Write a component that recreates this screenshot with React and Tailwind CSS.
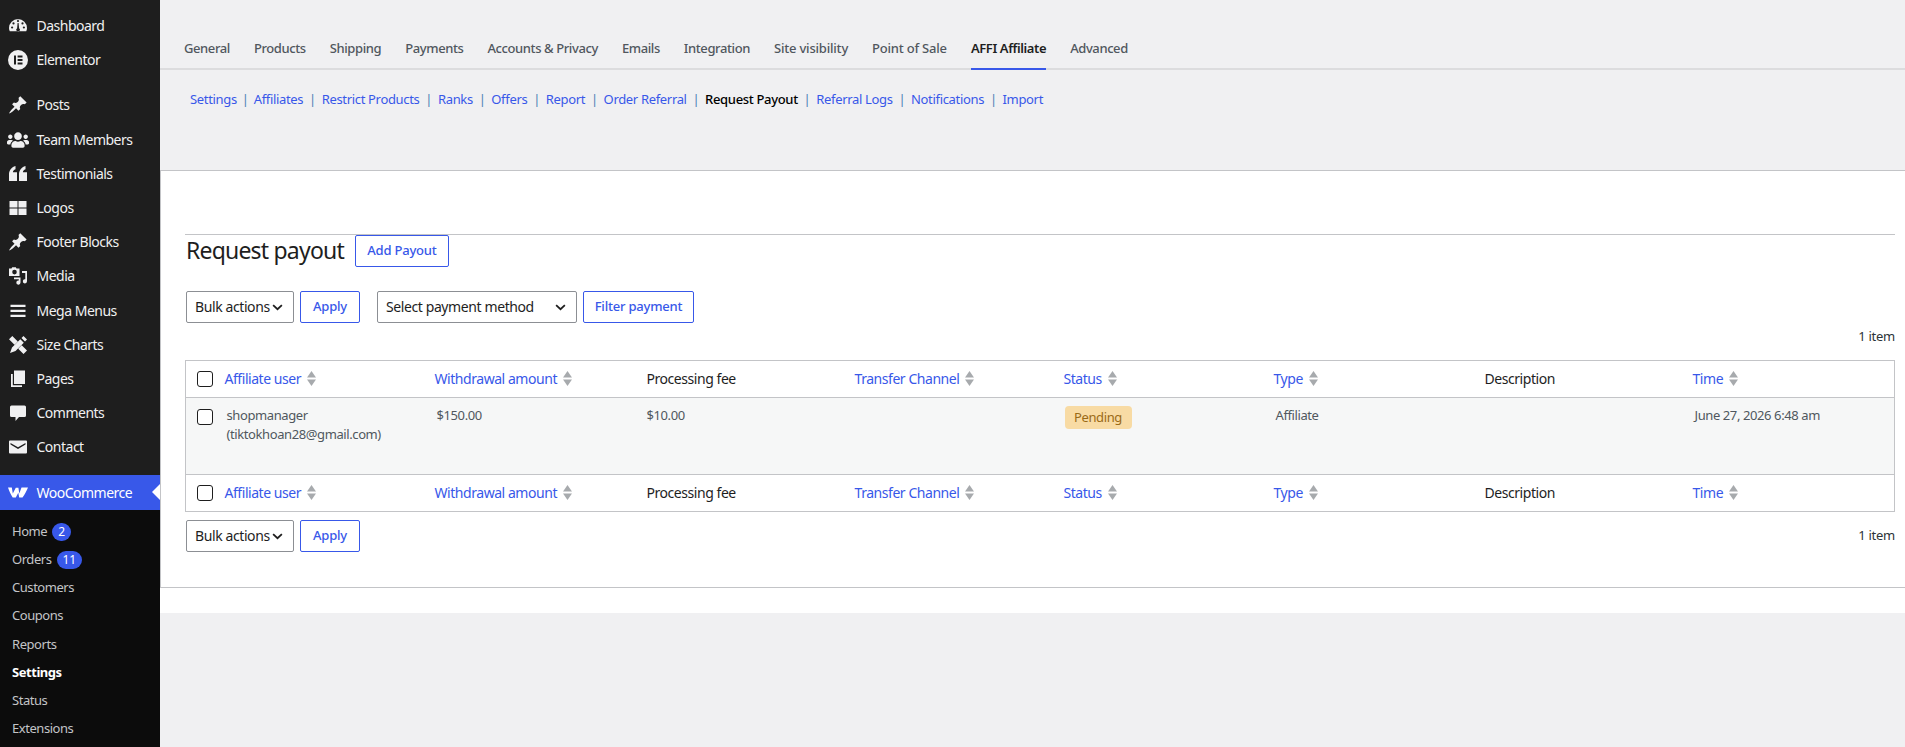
import { FaUsers } from "react-icons/fa";

const PIN = "M10.44 3.02l1.82-1.82 6.36 6.35-1.83 1.82c-1.05-.68-2.48-.57-3.41.36l-.75.75c-.92.93-1.04 2.35-.35 3.41l-1.83 1.82-2.41-2.41-2.8 2.79c-.42.42-3.38 2.71-3.8 2.29s1.86-3.39 2.28-3.81l2.79-2.79L4.1 9.36l1.83-1.82c1.05.69 2.48.57 3.4-.36l.75-.75c.93-.92 1.05-2.35.36-3.41z";

const icons = {
  dashboard: (
    <path fillRule="evenodd" d="M10 3a9 9 0 0 0-9 9c0 1.200.3 2.300.8 3.300h16.400c.5-1 .8-2.100.8-3.300a9 9 0 0 0-9-9zM8.900 5a1.100 1.100 0 1 1 2.200 0 1.100 1.100 0 0 1-2.200 0zM4.400 7.400a1.100 1.100 0 1 1 2.200 0 1.100 1.100 0 0 1-2.200 0zm9 0a1.100 1.100 0 1 1 2.200 0 1.100 1.100 0 0 1-2.200 0zM3 11.500a1.100 1.100 0 1 1 2.200 0 1.100 1.100 0 0 1-2.200 0zm11.800 0a1.100 1.100 0 1 1 2.200 0 1.100 1.100 0 0 1-2.200 0zM9.600 7h1l.5 5.200a1.800 1.800 0 1 1-2 0L9.600 7z" />
  ),
  elementor: (
    <path fillRule="evenodd" d="M10 0a10 10 0 1 0 0 20 10 10 0 0 0 0-20zM6 5.500h2v9H6v-9zm3.600 0H14.500v1.900H9.600V5.500zm0 3.600H14.500v1.800H9.600V9.100zm0 3.500H14.500v1.900H9.600v-1.900z" />
  ),
  pin: <path d={PIN} />,
  quote: (
    <path d="M1 10.500C1 6.500 3.300 3.300 7.500 2v3.300C5.800 6 5 7 4.900 8.300H9V17H1v-6.500zm10 0C11 6.500 13.300 3.300 17.500 2v3.300C15.800 6 15 7 14.900 8.300H19V17h-8v-6.500z" />
  ),
  logos: <path d="M1.500 3H9.500v6.500H1.500V3zm9 0H18.500v6.500H10.500V3zM1.500 10.500H9.500V17H1.500v-6.500zm9 0H18.500V17H10.500v-6.500z" />,
  media: (
    <path fillRule="evenodd" d="M1 2.500h2.500l.7-1.200h3.600l.7 1.200h3v7.500H1V2.500zm5.500 1.300a2.300 2.300 0 1 0 0 4.600 2.300 2.300 0 0 0 0-4.600zM14 5h5v10.300a2.100 2.100 0 1 1-1.700-2V7H14V5zM6 11.500h6.500v5a2.100 2.100 0 1 1-1.700-2v-1.300H6v-1.700z" />
  ),
  menu: <path d="M2.500 3.800h15v2.300h-15V3.800zm0 5h15v2.300h-15V8.800zm0 5h15v2.300h-15v-2.300z" />,
  size: (
    <path d="M15.500 1l3.500 3.500-2 2L13.500 3l2-2zM12.300 4.200l3.500 3.500L7.500 16l-5.500 2 2-5.500 8.300-8.300zM4.300 1l5.500 5.500-3.300 3.300L1 4.300 4.300 1zM13.700 10.200L19 15.500 15.500 19l-5.300-5.300 3.500-3.500z" />
  ),
  pages: <path d="M6 1.500h11V15H6V1.500zM3 5h1.800v11.200H14V18H3V5z" />,
  comments: <path d="M3.500 2.500h13A1.500 1.500 0 0 1 18 4v8.500a1.500 1.500 0 0 1-1.500 1.500H11l-3.500 4v-4h-4A1.500 1.500 0 0 1 2 12.500V4a1.500 1.500 0 0 1 1.500-1.500z" />,
  contact: (
    <path fillRule="evenodd" d="M2 3.500h16a1 1 0 0 1 1 1v11a1 1 0 0 1-1 1H2a1 1 0 0 1-1-1v-11a1 1 0 0 1 1-1zm.5 2.400v1.700l7.500 4.500 7.500-4.500V5.900L10 10.200 2.500 5.900z" />
  ),
  woo: (
    <path d="M0 4.500h3.800l1 6 3-5.700h2.600l.9 5.700L13.500 4.500H20c-1 2.800-3.500 7.300-5.500 10h-3.300l-.9-4.700-2.500 4.700H4.700C3 11.500 1 8 0 4.500z" />
  ),
};

const Icon = ({ name }) =>
  name === "groups" ? (
    <FaUsers size={22} className="-ml-[1px] shrink-0" />
  ) : (
    <svg viewBox="0 0 20 20" width={20} height={20} fill="currentColor" className="shrink-0">
      {icons[name]}
    </svg>
  );

const groupA = [["Dashboard", "dashboard"], ["Elementor", "elementor"]];
const groupB = [
  ["Posts", "pin"], ["Team Members", "groups"], ["Testimonials", "quote"], ["Logos", "logos"],
  ["Footer Blocks", "pin"], ["Media", "media"], ["Mega Menus", "menu"], ["Size Charts", "size"],
  ["Pages", "pages"], ["Comments", "comments"], ["Contact", "contact"],
];
const subItems = [
  ["Home", "2"], ["Orders", "11"], ["Customers"], ["Coupons"], ["Reports"], ["Settings", null, true], ["Status"], ["Extensions"],
];
const tabs = ["General", "Products", "Shipping", "Payments", "Accounts & Privacy", "Emails", "Integration", "Site visibility", "Point of Sale", "AFFI Affiliate", "Advanced"];
const subLinks = ["Settings", "Affiliates", "Restrict Products", "Ranks", "Offers", "Report", "Order Referral", "Request Payout", "Referral Logs", "Notifications", "Import"];

const SideItem = ({ label, icon }) => (
  <div className="flex h-[34.2px] items-center pl-[8px] text-[#f0f0f1]">
    <span className="flex w-[28.5px] justify-start"><Icon name={icon} /></span>
    <span className="text-[14px] leading-none tracking-[-0.5px]">{label}</span>
  </div>
);

const Sidebar = () => (
  <aside className="flex h-[747px] w-40 shrink-0 flex-col overflow-hidden bg-[#1e1e1e] pt-[9px]">
    <div className="mb-[11px]">
      {groupA.map(([l, i]) => <SideItem key={l} label={l} icon={i} />)}
    </div>
    <div className="mb-[11px]">
      {groupB.map(([l, i]) => <SideItem key={l} label={l} icon={i} />)}
    </div>
    <div className="relative flex h-[35px] items-center bg-[#3858e9] pl-[8px] text-white">
      <span className="flex w-[28.5px]"><Icon name="woo" /></span>
      <span className="text-[14px] leading-none tracking-[-0.5px]">WooCommerce</span>
      <span className="absolute right-0 top-[9px] h-0 w-0 border-y-[8px] border-r-[8px] border-y-transparent border-r-white" />
    </div>
    <div className="flex-1 bg-[#0c0c0c] pt-[7px]">
      {subItems.map(([l, badge, active]) => (
        <div key={l} className={`flex h-[28.2px] items-center gap-[5px] pl-3 text-[13px] tracking-[-0.45px] ${active ? "font-bold text-white" : "text-[#c3c4c7]"}`}>
          <span>{l}</span>
          {badge && (
            <span className="flex h-[18px] min-w-[18px] items-center justify-center rounded-full bg-[#3858e9] px-[6px] text-[12px] leading-none tracking-normal text-white">{badge}</span>
          )}
        </div>
      ))}
    </div>
  </aside>
);

const Chevron = () => (
  <svg viewBox="0 0 12 8" width="11" height="7" fill="none" stroke="#1e1e1e" strokeWidth="2" className="shrink-0">
    <path d="M1 1.200 6 6l5-4.800" />
  </svg>
);

const Btn = ({ children, w }) => (
  <button className={`flex h-8 items-center justify-center rounded-[2px] border border-[#3858e9] bg-white text-[13px] font-medium tracking-[-0.2px] text-[#3858e9] ${w}`}>
    {children}
  </button>
);

const Select = ({ label, w }) => (
  <div className={`flex h-8 items-center justify-between rounded-[2px] border border-[#8c8f94] bg-white pl-[8px] pr-[10px] text-[14px] tracking-[-0.4px] text-[#1e1e1e] ${w}`}>
    <span className="pb-[1px]">{label}</span>
    <Chevron />
  </div>
);

const Check = () => (
  <span className="block h-4 w-4 rounded-[3px] border border-[#1e1e1e] bg-white" />
);

const Sort = () => (
  <svg viewBox="0 0 9 15" width="9" height="15" className="ml-[6px] shrink-0">
    <path d="M4.500 0 9 6.500H0z" fill="#a7aaad" />
    <path d="M0 8.500h9L4.500 15z" fill="#a7aaad" />
  </svg>
);

const cols = [
  ["Affiliate user", true], ["Withdrawal amount", true], ["Processing fee", false], ["Transfer Channel", true],
  ["Status", true], ["Type", true], ["Description", false], ["Time", true],
];

const HeadCells = () => (
  <>
    <td className="pl-[11px] align-middle"><Check /></td>
    {cols.map(([l, link]) => (
      <td key={l} className="align-middle">
        <span className={`flex items-center pb-[2px] text-[14px] tracking-[-0.45px] ${link ? "text-[#3858e9]" : "text-[#1e1e1e]"}`}>
          {l}{link && <Sort />}
        </span>
      </td>
    ))}
  </>
);

const Table = () => (
  <table className="w-full table-fixed border-collapse border border-[#c3c4c7] bg-white">
    <colgroup>
      <col className="w-[39px]" />
      <col className="w-[210px]" />
      <col className="w-[212px]" />
      <col className="w-[208px]" />
      <col className="w-[209px]" />
      <col className="w-[210px]" />
      <col className="w-[211px]" />
      <col className="w-[208px]" />
      <col />
    </colgroup>
    <thead>
      <tr className="h-[37px] border-b border-[#c3c4c7]"><HeadCells /></tr>
    </thead>
    <tbody>
      <tr className="h-[77px] border-b border-[#c3c4c7] bg-[#f6f7f7] align-top text-[13px] leading-[19px] tracking-[-0.4px] text-[#50575e]">
        <td className="pl-[11px] pt-[11px]"><Check /></td>
        <td className="pl-[2px] pt-[8px]">shopmanager<br />(tiktokhoan28@gmail.com)</td>
        <td className="pl-[2px] pt-[8px]">$150.00</td>
        <td className="pt-[8px]">$10.00</td>
        <td className="pt-[8px]"></td>
        <td className="pl-[1px] pt-[8px]">
          <span className="inline-flex h-[23px] w-[67px] items-center justify-center rounded-[4px] bg-[#f8dba4] text-[#9a6a16]">Pending</span>
        </td>
        <td className="pl-[2px] pt-[8px]">Affiliate</td>
        <td className="pt-[8px]"></td>
        <td className="pl-[2px] pt-[8px]">June 27, 2026 6:48 am</td>
      </tr>
    </tbody>
    <tfoot>
      <tr className="h-[37px]"><HeadCells /></tr>
    </tfoot>
  </table>
);

const Content = () => (
  <div className="flex-1">
    <nav className="flex h-[70px] items-end gap-[24px] border-b-2 border-[#dcdcde] pl-[24px]">
      {tabs.map((t) => {
        const active = t === "AFFI Affiliate";
        const loose = t === "Site visibility" || t === "Point of Sale";
        return (
          <a key={t} className={`-mb-[2px] flex h-[50px] items-start border-b-2 pt-[18px] text-[13px] leading-[20px] ${loose ? "tracking-[-0.2px]" : "tracking-[-0.4px]"} ${active ? "border-[#3858e9] font-semibold text-[#1e1e1e]" : "border-transparent font-medium text-[#50575e]"}`}>
            {t}
          </a>
        );
      })}
    </nav>
    <div className="flex h-[100px] items-start pl-[30px] pt-[19px] text-[13px] leading-[20px] tracking-[-0.33px]">
      {subLinks.map((t, i) => (
        <span key={t} className="flex">
          {i > 0 && <span className={`${i === 1 ? "mx-[5px]" : "mx-[5.8px]"} text-[#4a7fb5]`}>|</span>}
          <a className={t === "Request Payout" ? "font-medium text-black" : "text-[#3858e9]"}>{t}</a>
        </span>
      ))}
    </div>
    <section className="h-[418px] border-y border-l border-[#c3c4c7] bg-white pl-[24px] pr-[10px] pt-[63px]">
      <div className="flex items-start gap-[11px] border-t border-[#c3c4c7] pb-[24px]">
        <h1 className="pl-[1px] text-[23px] font-normal leading-[30px] tracking-[-0.8px] text-[#1e1e1e]">Request payout</h1>
        <Btn w="w-[94px]">Add Payout</Btn>
      </div>
      <div className="flex items-center pl-[1px]">
        <Select label="Bulk actions" w="w-[108px]" />
        <span className="ml-[6px]"><Btn w="w-[60px]">Apply</Btn></span>
        <span className="ml-[17px]"><Select label="Select payment method" w="w-[200px]" /></span>
        <span className="ml-[6px]"><Btn w="w-[111px]">Filter payment</Btn></span>
      </div>
      <div className="mb-[14px] mt-[4px] text-right text-[13px] leading-[19px] tracking-[-0.25px] text-[#2c3338]">1 item</div>
      <Table />
      <div className="mt-[8px] flex items-start pl-[1px]">
        <Select label="Bulk actions" w="w-[108px]" />
        <span className="ml-[6px]"><Btn w="w-[60px]">Apply</Btn></span>
        <span className="ml-auto mt-[6px] text-[13px] leading-[19px] tracking-[-0.25px] text-[#2c3338]">1 item</span>
      </div>
    </section>
    <div className="h-[25px] bg-white" />
  </div>
);

export default function App() {
  return (
    <div className="flex h-[747px] w-full overflow-hidden bg-[#f0f0f2] font-['Noto_Sans',sans-serif]">
      <Sidebar />
      <Content />
    </div>
  );
}
